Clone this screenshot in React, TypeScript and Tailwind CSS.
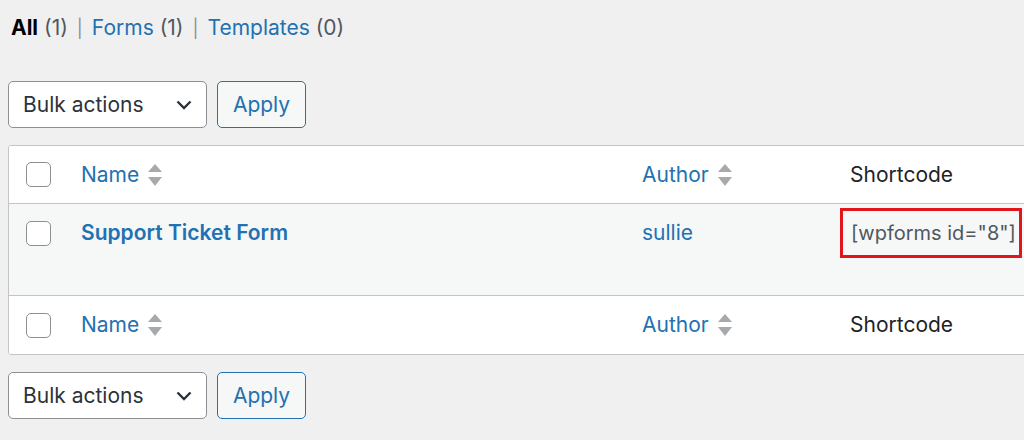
import React from 'react';

const font = { fontFamily: 'Inter, "Liberation Sans", Arial, sans-serif' };

function SortArrows() {
  return (
    <svg width="14" height="22" viewBox="0 0 14 22" className="ml-[9px] shrink-0">
      <polygon points="0,8 7,0 14,8" fill="#a7aaad" />
      <polygon points="0,13 14,13 7,22" fill="#a7aaad" />
    </svg>
  );
}

function Checkbox() {
  return <span className="block w-[25px] h-[25px] rounded-[5px] border border-[#8c8f94] bg-white" />;
}

function TableNav() {
  return (
    <div className="flex items-center gap-[10px] h-[47px]">
      <div className="flex items-center justify-between w-[199px] h-[47px] pl-[14px] pr-[14px] border border-[#8c8f94] rounded-[5px] bg-white text-[#2c3338]">
        <span>Bulk actions</span>
        <svg width="16" height="10" viewBox="0 0 16 10">
          <path d="M1.5 1.5 L8 8 L14.5 1.5" fill="none" stroke="#2c3338" strokeWidth="2.4" />
        </svg>
      </div>
      <button className="w-[89px] h-[47px] border border-[#2271b1] rounded-[5px] bg-[#f6f7f7] text-[#2271b1]">
        Apply
      </button>
    </div>
  );
}

function HeaderRow({ bottomBorder }: { bottomBorder?: boolean }) {
  return (
    <div
      className={`grid grid-cols-[72px_561px_208px_1fr] items-center h-[58px] bg-white ${
        bottomBorder ? 'border-b border-[#c3c4c7]' : ''
      }`}
    >
      <div className="pl-[17px]">
        <Checkbox />
      </div>
      <div className="flex items-center text-[#2271b1]">
        <span>Name</span>
        <SortArrows />
      </div>
      <div className="flex items-center text-[#2271b1]">
        <span>Author</span>
        <SortArrows />
      </div>
      <div className="text-[#1d2327]">Shortcode</div>
    </div>
  );
}

export default function App() {
  return (
    <div className="w-[1024px] h-[440px] overflow-hidden bg-[#f0f0f1] pl-[8px] text-[21px] leading-[28px]" style={font}>
      <div className="pt-[14px] pl-[3px] h-[81px] text-[#50575e]">
        <span className="font-bold text-black">All</span> (1)
        <span className="mx-[9px] text-[#8c8f94] text-[18px]">|</span>
        <span className="text-[#2271b1]">Forms</span> (1)
        <span className="mx-[9px] text-[#8c8f94] text-[18px]">|</span>
        <span className="text-[#2271b1]">Templates</span> (0)
      </div>

      <TableNav />

      <div className="mt-[17px] w-[1030px] border border-[#c3c4c7] rounded-[3px] bg-white overflow-hidden">
        <HeaderRow bottomBorder />
        <div className="grid grid-cols-[72px_561px_208px_1fr] h-[92px] bg-[#f6f7f7] border-b border-[#c3c4c7]">
          <div className="pl-[17px] pt-[17px]">
            <Checkbox />
          </div>
          <div className="pt-[15px] font-semibold text-[#2271b1]">Support Ticket Form</div>
          <div className="pt-[15px] text-[#2271b1]">sullie</div>
          <div className="pt-[4px] -ml-[10px]">
            <span className="inline-block border-[3px] border-[#e2141c] pl-[8px] pr-[3px] py-[8px] text-[20px] text-[#50575e]">
              [wpforms id="8"]
            </span>
          </div>
        </div>
        <HeaderRow />
      </div>

      <div className="mt-[17px]">
        <TableNav />
      </div>
    </div>
  );
}
